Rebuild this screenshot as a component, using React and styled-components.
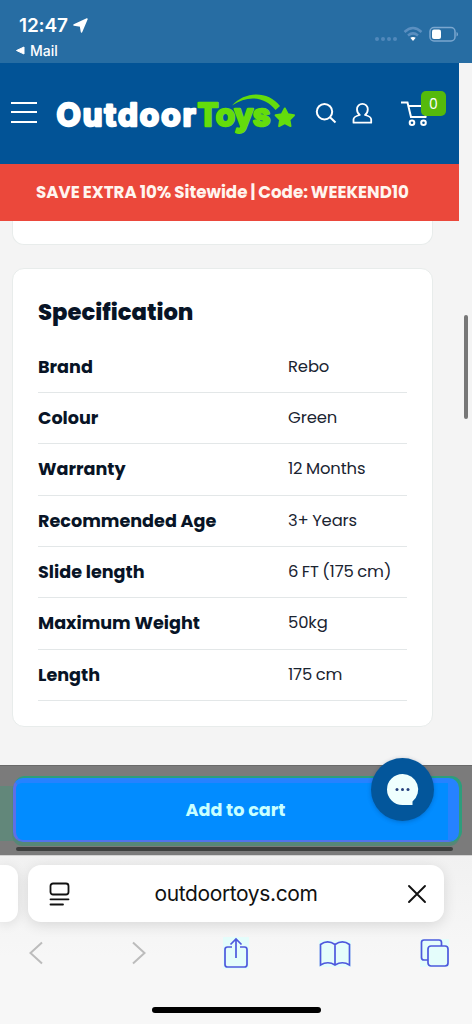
import React from 'react'
import styled, { createGlobalStyle } from 'styled-components'

const GlobalStyle = createGlobalStyle`
  * {
    box-sizing: border-box;
  }
  body {
    margin: 0;
    background: #f4f4f4;
    font-family: Poppins, Inter, sans-serif;
    color: #081426;
  }
`;

const Screen = styled.div`
    position: relative;
    display: flex;
    flex-direction: column;
    width: 472px;
    height: 1024px;
    overflow: hidden;
    background: #f4f4f4;
`;

const StatusBar = styled.div`
    display: flex;
    justify-content: space-between;
    height: 63px;
    flex: none;
    padding: 14px 14px 0 15px;
    background: #276da3;
    color: white;
    font-family: Inter, sans-serif;
`;

const Clock = styled.div`
    display: flex;
    align-items: center;
    gap: 5px;
    height: 23px;
    padding-left: 4px;
    font-size: 19px;
    font-weight: 600;
    letter-spacing: -0.15px;
`;

const BackLink = styled.div`
    display: flex;
    align-items: center;
    gap: 5px;
    height: 27px;
    font-size: 14px;
    font-weight: 500;
`;

const StatusIcons = styled.div`
    display: flex;
    align-items: center;
    height: 42px;
`;

const Header = styled.header`
    display: flex;
    align-items: center;
    flex: none;
    width: 459px;
    height: 101px;
    padding-left: 11px;
    background: #025396;
`;

const MenuButton = styled.button`
    display: flex;
    flex-direction: column;
    justify-content: space-between;
    width: 26px;
    height: 21px;
    margin: -3px 17px 0 0;
    padding: 0;
    border: none;
    background: none;
`;

const MenuLine = styled.span`
    height: 2px;
    background: white;
`;

const Logo = styled.svg`
    flex: none;
    display: block;
    margin-right: 19px;
    font-family: Inter, sans-serif;
    font-size: 31.5px;
    font-weight: 700;
`;

const HeaderIcon = styled.svg`
    flex: none;
    display: block;
    margin-right: ${props => props.$gap || 0}px;
    fill: none;
    stroke: white;
    stroke-width: 2;
`;

const Cart = styled.div`
    position: relative;
    height: 26px;
`;

const CartCount = styled.span`
    position: absolute;
    left: 20px;
    top: -10px;
    width: 25px;
    height: 25px;
    border-radius: 5px;
    background: #55ba0b;
    color: white;
    font-size: 14px;
    line-height: 26px;
    text-align: center;
`;

const Promo = styled.div`
    flex: none;
    width: 459px;
    height: 57px;
    padding-left: 36px;
    background: #eb483b;
    color: #fff5ef;
    font-size: 16.7px;
    font-weight: 700;
    line-height: 56px;
    word-spacing: -0.6px;
    white-space: nowrap;
`;

const Content = styled.main`
    display: flex;
    flex-direction: column;
    gap: 23px;
    height: 544px;
    flex: none;
    padding-left: 12px;
`;

const Card = styled.section`
    width: 421px;
    height: ${props => props.$height}px;
    padding: 0 25px;
    border: 1px solid #e8eceb;
    border-top-width: ${props => (props.$cut ? 0 : 1)}px;
    border-radius: ${props => (props.$cut ? '0 0 12px 12px' : '12px')};
    background: white;
`;

const Title = styled.h2`
    margin: 0;
    height: 72.8px;
    padding-top: 26px;
    font-size: 22.7px;
    font-weight: 800;
    line-height: 34px;
`;

const Row = styled.div`
    display: grid;
    grid-template-columns: 250px 1fr;
    height: 51.3px;
    border-bottom: 1.5px solid #e3e7e8;
    line-height: 51px;
    white-space: nowrap;
`;

const Label = styled.span`
    font-size: 17.6px;
    font-weight: 700;
`;

const Value = styled.span`
    font-size: 16.4px;
    font-weight: 400;
    line-height: 50px;
    color: #1a2431;
    letter-spacing: -0.12px;
    word-spacing: -0.7px;
`;

const BuyBar = styled.div`
    position: relative;
    flex: none;
    display: flex;
    flex-direction: column;
    height: 90px;
    padding: 13px 13px 0;
    border-top: 1px solid #696969;
    background: linear-gradient(90deg, #62877a 0, #62877a 14px, #7b7b7b 15px) 0 20px / 100% 55px no-repeat, #7b7b7b;
`;

const BuyButton = styled.button`
    height: 64px;
    margin-top: -1px;
    padding: 0 0 4px 7px;
    border: solid;
    border-width: 5px 11px 2px 3px;
    border-color: #2682ff #2682ff #5173ec #5e70e5;
    border-radius: 10px;
    background: #028cff;
    box-shadow: 2px -1px 0 1px #2d9e7c, 0 3px 0 1px #568777;
    color: #c8ffff;
    font-family: inherit;
    font-size: 17.6px;
    font-weight: 700;
    line-height: 50px;
`;

const BarLine = styled.div`
    width: 437px;
    height: 4px;
    margin: 5px 0 0 3px;
    border-radius: 2px;
    background: #3d3f3e;
`;

const ChatButton = styled.button`
    position: absolute;
    left: 371px;
    top: -8px;
    width: 63px;
    height: 63px;
    padding: 0;
    border: none;
    border-radius: 50%;
    background: #03569b;
    box-shadow: 0 1px 4px rgba(0, 40, 90, 0.3);
`;

const ScrollThumb = styled.div`
    position: absolute;
    left: 464px;
    top: 315px;
    width: 4px;
    height: 104px;
    border-radius: 2px;
    background: #777;
`;

const BrowserBar = styled.footer`
    flex: 1;
    display: flex;
    flex-direction: column;
    border-top: 1px solid #d2d2d2;
    background: linear-gradient(#f1f1f1, #f7f7f7 60%);
`;

const Tabs = styled.div`
    display: flex;
    gap: 10px;
    padding-top: 9px;
`;

const PreviousTab = styled.div`
    width: 18px;
    height: 57px;
    border-radius: 0 12px 12px 0;
    background: white;
    box-shadow: 0 2px 12px rgba(0, 0, 0, 0.1);
`;

const AddressBar = styled.div`
    display: flex;
    align-items: center;
    justify-content: space-between;
    width: 416px;
    height: 57px;
    padding: 0 17px 0 21px;
    border-radius: 13px;
    background: white;
    box-shadow: 0 3px 14px rgba(0, 0, 0, 0.12);
    color: #111;
    font-family: Inter, sans-serif;
    font-size: 21px;
`;

const Domain = styled.span`
    padding: 0 5px 0 0;
    letter-spacing: -0.38px;
`;

const Toolbar = styled.nav`
    display: flex;
    align-items: center;
    height: 62px;
    padding-left: 28px;
`;

const ToolIcon = styled.svg`
    display: block;
    flex: none;
    margin-right: ${props => props.$gap || 0}px;
    fill: none;
    stroke: ${props => (props.$muted ? '#bcbcbc' : '#4d59dd')};
    stroke-width: ${props => (props.$muted ? 2 : 1.7)};
    background: ${props => (props.$muted ? 'none' : '#e4fdfb')};
`;

const HomeIndicator = styled.div`
    width: 169px;
    height: 6px;
    margin: 23px 0 0 152px;
    border-radius: 3px;
    background: black;
`;

const specs = [
    { label: 'Brand', value: 'Rebo' },
    { label: 'Colour', value: 'Green' },
    { label: 'Warranty', value: '12 Months' },
    { label: 'Recommended Age', value: '3+ Years' },
    { label: 'Slide length', value: '6 FT (175 cm)' },
    { label: 'Maximum Weight', value: '50kg' },
    { label: 'Length', value: '175 cm' },
];

const App = () => {
    return (
        <>
            <GlobalStyle />
            <Screen>
                <StatusBar>
                    <div>
                        <Clock>
                            12:47
                            <svg width="15" height="15" viewBox="0 0 15 15">
                                <path d="M14 1 8.5 14 7.5 8 1 7Z" fill="white" stroke="white" strokeWidth="1.5" strokeLinejoin="round" />
                            </svg>
                        </Clock>
                        <BackLink>
                            <svg width="10" height="9" viewBox="0 0 10 9">
                                <path d="M1.5 4.5 9 1v7Z" fill="white" stroke="white" strokeLinejoin="round" />
                            </svg>
                            Mail
                        </BackLink>
                    </div>
                    <StatusIcons>
                        <svg width="84" height="20" viewBox="0 0 84 20">
                            <g fill="#5188bb">
                                <circle cx="3" cy="14" r="2" />
                                <circle cx="9" cy="14" r="2" />
                                <circle cx="15" cy="14" r="2" />
                                <circle cx="21" cy="14" r="2" />
                            </g>
                            <g fill="none" stroke="#5b8fc0" strokeWidth="2.5">
                                <path d="M30.5 7Q39 -1 47.5 7" />
                                <path d="M34 10.5Q39 6.3 44 10.5" />
                            </g>
                            <path d="M36.3 12.8Q39 11 41.7 12.8L39 16Z" fill="white" />
                            <rect x="56" y="2.5" width="25" height="13.5" rx="4" fill="none" stroke="#7ba7cf" strokeWidth="1.5" />
                            <rect x="58" y="4.5" width="9" height="9.5" rx="2" fill="white" />
                            <path d="M82.5 7v4.5q1.5-.5 1.5-2.2t-1.5-2.3" fill="#7ba7cf" />
                        </svg>
                    </StatusIcons>
                </StatusBar>

                <Header>
                    <MenuButton>
                        <MenuLine />
                        <MenuLine />
                        <MenuLine />
                    </MenuButton>
                    <Logo width="242" height="48" viewBox="54 89 242 48">
                        <text x="56.5" y="125.3" fill="white" stroke="white" strokeWidth="2.6" strokeLinejoin="round" textLength="139" lengthAdjust="spacing">Outdoor</text>
                        <text x="197.5" y="125.3" fill="#64dc0c" stroke="#64dc0c" strokeWidth="2.6" strokeLinejoin="round" textLength="73" lengthAdjust="spacing">Toys</text>
                        <path d="M232 104.5C245 90 268 89.5 280 105L275.5 109C265 95.5 248 93.5 232 104.5Z" fill="#64dc0c" />
                        <path d="m284.8 107.5 3 5.8 6.2 1-4.5 4.5 1 6.3-5.7-2.9-5.7 2.9 1-6.3-4.5-4.5 6.2-1Z" fill="#64dc0c" stroke="#64dc0c" strokeWidth="2" strokeLinejoin="round" />
                    </Logo>
                    <HeaderIcon $gap={15} width="22" height="22" viewBox="0 0 22 22">
                        <circle cx="9.5" cy="8.7" r="7.7" />
                        <path d="m15 14.3 5.5 5.2" />
                    </HeaderIcon>
                    <HeaderIcon $gap={28} width="21" height="22" viewBox="0 0 21 22">
                        <path d="M7.8 12C5.8 10.5 5 8.5 5 6.3a5.4 5.4 0 0 1 10.8 0c0 2.2-.8 4.2-2.8 5.7 3.7.9 6.2 1.7 6.2 4.5v3.2H1.5v-3.2c0-2.8 2.6-3.6 6.3-4.5Z" strokeWidth="1.8" strokeLinejoin="round" />
                    </HeaderIcon>
                    <Cart>
                        <HeaderIcon width="30" height="26" viewBox="0 0 30 26">
                            <path d="M0 1.5h6.5l3.5 14.5h14.5l2-11H7.5" />
                            <circle cx="11" cy="21.7" r="2.3" />
                            <circle cx="22.5" cy="21.7" r="2.3" />
                        </HeaderIcon>
                        <CartCount>0</CartCount>
                    </Cart>
                </Header>

                <Promo>SAVE EXTRA 10% Sitewide | Code: WEEKEND10</Promo>

                <Content>
                    <Card $cut $height={24} />
                    <Card $height={459}>
                        <Title>Specification</Title>
                        {specs.map((s) => (
                            <Row key={s.label}>
                                <Label>{s.label}</Label>
                                <Value>{s.value}</Value>
                            </Row>
                        ))}
                    </Card>
                </Content>

                <BuyBar>
                    <BuyButton>Add to cart</BuyButton>
                    <BarLine />
                    <ChatButton>
                        <svg width="63" height="63" viewBox="0 0 63 63">
                            <path d="M31.5 16a15.5 15.5 0 1 0 0 31H41.5V43.5A15.5 15.5 0 0 0 31.5 16Z" fill="#effffe" />
                            <g fill="#26407c">
                                <circle cx="26" cy="31.5" r="1.5" />
                                <circle cx="31.5" cy="31.5" r="1.5" />
                                <circle cx="37" cy="31.5" r="1.5" />
                            </g>
                        </svg>
                    </ChatButton>
                </BuyBar>

                <BrowserBar>
                    <Tabs>
                        <PreviousTab />
                        <AddressBar>
                            <svg width="21" height="24" viewBox="0 0 21 24" fill="none" stroke="#111" strokeWidth="1.8" strokeLinecap="round">
                                <rect x="1.5" y="1.5" width="18" height="11" rx="2.5" />
                                <path d="M1.5 17.3h18M1.5 22.5H14" />
                            </svg>
                            <Domain>outdoortoys.com</Domain>
                            <svg width="20" height="20" viewBox="0 0 20 20" stroke="#111" strokeWidth="1.9" strokeLinecap="round">
                                <path d="m2 2 16 16M18 2 2 18" />
                            </svg>
                        </AddressBar>
                    </Tabs>
                    <Toolbar>
                        <ToolIcon $muted $gap={87} width="16" height="24" viewBox="0 0 16 24">
                            <path d="M14 1.5 2.5 12 14 22.5" />
                        </ToolIcon>
                        <ToolIcon $muted $gap={76} width="16" height="24" viewBox="0 0 16 24">
                            <path d="M2 1.5 13.5 12 2 22.5" />
                        </ToolIcon>
                        <ToolIcon $gap={70} width="26" height="32" viewBox="0 0 26 32">
                            <path d="M9 10H4.5Q2 10 2 12.5v15Q2 30 4.5 30h17q2.5 0 2.5-2.5v-15Q24 10 21.5 10H17M13 21V2M7.5 7.5 13 2l5.5 5.5" />
                        </ToolIcon>
                        <ToolIcon $gap={69} width="32" height="27" viewBox="0 0 32 27">
                            <path d="M16 4.5Q8.5-.8 1.5 4.5v20.5q7.5-4.5 14.5 0 7.5-4.5 14.5 0V4.5Q23.5-.8 16 4.5V25" />
                        </ToolIcon>
                        <ToolIcon width="29" height="28" viewBox="0 0 29 28">
                            <path d="M8 21H4Q1.5 21 1.5 18.5V3.5Q1.5 1 4 1h15q2.5 0 2.5 2.5V7" />
                            <rect x="8" y="7" width="20" height="20" rx="3" />
                        </ToolIcon>
                    </Toolbar>
                    <HomeIndicator />
                </BrowserBar>
                <ScrollThumb />
            </Screen>
        </>
    )
}

export default App
